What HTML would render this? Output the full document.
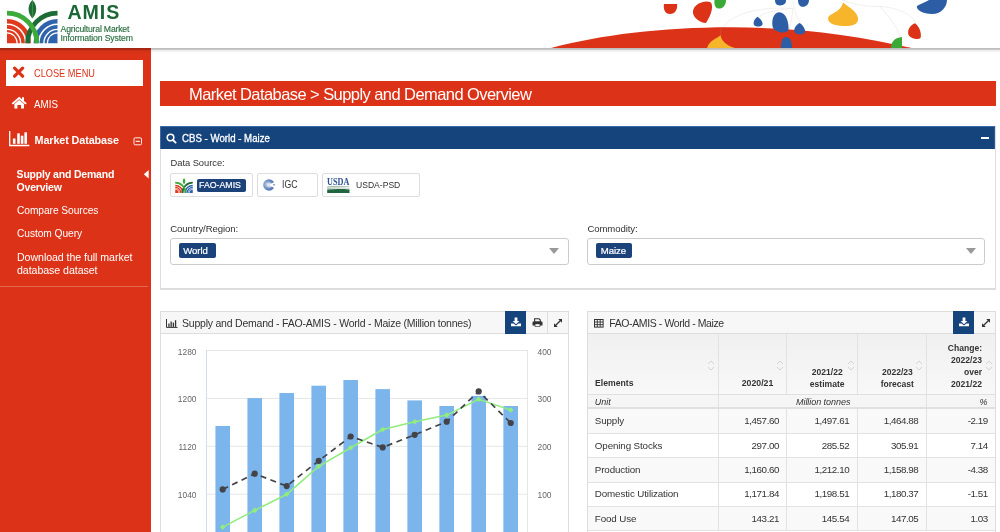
<!DOCTYPE html>
<html><head><meta charset="utf-8">
<style>
*{margin:0;padding:0;box-sizing:border-box}
html,body{width:1000px;height:532px;overflow:hidden;background:#fff;-webkit-font-smoothing:antialiased;font-family:"Liberation Sans",sans-serif;color:#333}
.a{position:absolute}
.t{white-space:nowrap;position:absolute;line-height:1}
#hdr{left:0;top:0;width:1000px;height:48px;background:#fff;z-index:5}
#shadow{left:0;top:48px;width:1000px;height:5px;z-index:6;background:linear-gradient(rgba(0,0,0,.27) 0,rgba(0,0,0,.22) 1.5px,rgba(0,0,0,.07) 2.5px,rgba(0,0,0,0) 5px)}
#side{left:0;top:48px;width:151px;height:484px;background:#dc3318;color:#fff}
.btn{position:absolute;border:1px solid #ddd;border-radius:2px;background:#fff}
.tag{position:absolute;background:#1b4279;color:#fff;border-radius:2px}
.sel{position:absolute;border:1px solid #ccc;border-radius:3px;background:#fff}
.arrow{position:absolute;width:0;height:0;border-left:5.5px solid transparent;border-right:5.5px solid transparent;border-top:6px solid #999}
</style></head><body><div id="root" style="position:absolute;left:0;top:0;width:1000px;height:532px;will-change:transform">
<div id="hdr" class="a">
<svg class="a" style="left:0;top:0" width="140" height="48" viewBox="0 0 140 48">
  <defs><clipPath id="lc"><rect x="7" y="0" width="50.5" height="43.2"/></clipPath></defs>
  <g clip-path="url(#lc)">
    <g fill="none" stroke="#e03a1e">
      <circle cx="7" cy="43" r="21.75" stroke-width="4.3"/>
      <circle cx="7" cy="43" r="16.1" stroke-width="3.6"/>
      <circle cx="7" cy="43" r="11.8" stroke-width="2.2"/>
    </g>
    <circle cx="7" cy="43" r="9.5" fill="#e03a1e"/>
    <g fill="none" stroke="#2f64ad">
      <circle cx="57.5" cy="43" r="21.75" stroke-width="4.3"/>
      <circle cx="57.5" cy="43" r="16.1" stroke-width="3.6"/>
      <circle cx="57.5" cy="43" r="11.8" stroke-width="2.2"/>
    </g>
    <circle cx="57.5" cy="43" r="9.5" fill="#2f64ad"/>
    <circle cx="57.5" cy="43" r="29.9" fill="none" stroke="#1d6b35" stroke-width="4.8"/>
    <circle cx="7" cy="43" r="29.9" fill="none" stroke="#3daa3c" stroke-width="4.8"/>
  </g>
  <path d="M32.4,0 C37.5,5 37.5,13 32.4,18.5 C27.3,13 27.3,5 32.4,0 Z" fill="#1d6b35"/>
  <path d="M32.4,1 L32.4,18" stroke="#4aa04a" stroke-width="0.8"/>
  <text x="67.5" y="18.8" font-family="Liberation Sans" font-weight="bold" font-size="19.6" fill="#1a6634" letter-spacing="0.95">AMIS</text>
  <text x="60.6" y="32.4" font-family="Liberation Sans" font-size="8.7" fill="#2a6e40" stroke="#2a6e40" stroke-width="0.15" letter-spacing="-0.2">Agricultural Market</text>
  <text x="60.6" y="41.4" font-family="Liberation Sans" font-size="8.7" fill="#2a6e40" stroke="#2a6e40" stroke-width="0.15" letter-spacing="-0.15">Information System</text>
</svg>
<svg class="a" style="left:540px;top:0" width="460" height="48" viewBox="540 0 460 48">
  <g fill="none" stroke="#e4e4e4" stroke-width="0.6">
    <path d="M793,8.5 C760,6 724,14 720,35"/>
    <path d="M793,8.5 C780,9 766,12 758,17"/>
    <path d="M793,0 C793,8 797,16 800,23"/>
    <path d="M793,8.5 C792,18 790,28 787,37"/>
    <path d="M842,0 C852,4 866,7 880,6.5 C895,7 912,14 916,23"/>
    <path d="M880,6.5 C888,15 898,28 900,37"/>
  </g>
  <path d="M549,48.5 C600,35 660,27.5 730,27.3 C800,27.2 860,36 914,48.5 Z" fill="#dc3318"/>
  <path d="M707,48 C708.5,43.5 711,41 715.5,38.5 C718.5,37 720,36 720.5,35 C721.5,41 726,45.5 735,48 Z" fill="#f7b52c"/><path d="M720.5,35 C720.5,31 721,29 722,27.5" stroke="#c9584a" stroke-width="0.5" fill="none"/>
  <path d="M664,4 L677,4 C678,9 675,14 670,14 C665,14 663,9 664,4 Z" fill="#dc3318"/>
  <path d="M710,2 C714,4 712,14 706,23 C700,23 692,17 693,11 C694,4 704,0 710,2 Z" fill="#dc3318"/>
  <path d="M714.5,0 L726,0 C726,5 723,8.8 718.5,8.6 C715,8.4 714,4 714.5,0 Z" fill="#3aa935"/>
  <path d="M757.5,16.8 C760,18.5 762.8,21 762.5,24.5 C762,27 755,27.5 753.8,24.5 C753,21.5 755,18.5 757.5,16.8 Z" fill="#2c5da5"/>
  <path d="M779,12.2 C786,12 789,22 788.5,30 C787,34 776,33 773,28 C771,21 773,13 779,12.2 Z" fill="#2c5da5"/>
  <path d="M775,0 L786,0 C786.5,3 784,5.4 780,5.4 C776,5.4 775,3 775,0 Z" fill="#2c5da5"/>
  <path d="M798,0 L809,0 C809,4 806,6.8 803,6.8 C799,6.8 798,3 798,0 Z" fill="#2c5da5"/>
  <path d="M799.5,23 C803,25 805.5,29 805,32.5 C803,35.5 795.5,35 794.3,31.5 C793.8,28 796,25 799.5,23 Z" fill="#2c5da5"/>
  <path d="M786,37 C790,37 792,41 792,48 L781,48 C781,42 782,37 786,37 Z" fill="#2c5da5"/>
  <path d="M843,2.5 C850,8 858,12 858,19 C858.5,25.5 850,26.5 840,25.8 C830,25 826,20 829,16 C832,13 841,11.5 843,2.5 Z" fill="#f7b52c"/>
  <path d="M902,37 L902,48 L891,48 C891,42 894,38 902,37 Z" fill="#3aa935"/>
  <path d="M915,23.2 C919,26 922,33 920.5,38 C918,40 911,39 908.5,35 C907,30 910,25 915,23.2 Z" fill="#dc3318"/>
  <path d="M947,0 C947,6 942,14 932,14 C923,14 916,10 917,6 C920,4 926,2 929,0 Z" fill="#2c5da5"/>
</svg>
</div>
<div id="shadow" class="a"></div>

<div id="side" class="a">
  <div class="a" style="left:6px;top:12px;width:137px;height:26px;background:#fff"></div>
  <svg class="a" style="left:12px;top:18px" width="14" height="13" viewBox="0 0 14 13"><path d="M2.6,2.2 L10.6,10.2 M10.6,2.2 L2.6,10.2" stroke="#dc3318" stroke-width="3.2" stroke-linecap="round"/></svg>
  <div class="t" style="left:34px;top:21px;font-size:10.4px;color:#dc3318;transform:scaleX(0.887);transform-origin:0 0">CLOSE MENU</div>
  <svg class="a" style="left:11px;top:48px" width="17" height="13" viewBox="0 0 17 13"><path d="M8.2,0.8 L0.6,7.3 L2,8.6 L8.2,3.3 L14.4,8.6 L15.8,7.3 L13,4.9 L13,1.2 L11,1.2 L11,3.2 Z M3.4,8 L8.2,4.1 L13,8 L13,12.6 L10,12.6 L10,9 L6.4,9 L6.4,12.6 L3.4,12.6 Z" fill="#fff"/></svg>
  <div class="t" style="left:34px;top:52px;font-size:10.3px;transform:scaleX(0.95);transform-origin:0 0">AMIS</div>
  <svg class="a" style="left:9px;top:83px" width="22" height="16" viewBox="0 0 22 16"><path d="M0.7,0 V14.5 H20.3" stroke="#fff" stroke-width="1.3" fill="none"/><rect x="3.9" y="7.5" width="2.6" height="5.3" fill="#fff"/><rect x="8.2" y="2.4" width="2.6" height="10.4" fill="#fff"/><rect x="11.8" y="4.7" width="2.6" height="8.1" fill="#fff"/><rect x="15.4" y="1.3" width="2.6" height="11.5" fill="#fff"/></svg>
  <div class="t" style="left:34.5px;top:87px;font-size:10.8px;font-weight:bold;letter-spacing:-0.1px">Market Database</div>
  <svg class="a" style="left:132.5px;top:89px" width="10" height="9" viewBox="0 0 10 9"><rect x="1" y="0.8" width="7.5" height="7" rx="1.2" fill="none" stroke="#fff" stroke-width="0.9"/><rect x="2.7" y="3.8" width="4.1" height="1.1" fill="#fff"/></svg>
  <div class="t" style="left:16.6px;top:120px;font-size:10.5px;font-weight:bold;line-height:12.5px;letter-spacing:-0.2px">Supply and Demand<br>Overview</div>
  <svg class="a" style="left:143px;top:122px" width="6" height="9" viewBox="0 0 6 9"><path d="M5.7,0 L5.7,8.5 L0.8,4.25 Z" fill="#fff"/></svg>
  <div class="t" style="left:17px;top:158px;font-size:10.2px;letter-spacing:-0.05px">Compare Sources</div>
  <div class="t" style="left:17px;top:181px;font-size:10.2px;letter-spacing:-0.05px">Custom Query</div>
  <div class="t" style="left:17px;top:202.8px;font-size:10.6px;line-height:13px;letter-spacing:-0.05px">Download the full market<br>database dataset</div>
  <div class="a" style="left:0;top:238px;width:148px;height:1px;background:#e46a52"></div>
</div>

<!-- title -->
<div class="a" style="left:160px;top:81px;width:836px;height:25.4px;background:#dc3318"></div>
<div class="t" style="left:189px;top:86px;font-size:16.5px;color:#fff;letter-spacing:-0.57px">Market Database &gt; Supply and Demand Overview</div>

<!-- CBS panel -->
<div class="a" style="left:160px;top:126px;width:836px;height:163.5px;border:1px solid #ddd;border-top:none;border-bottom:2px solid #ddd"></div>
<div class="a" style="left:160.3px;top:126px;width:835.2px;height:23px;background:#15437b;border:1px solid #3b6aa8;border-bottom:none;border-right-color:#2b5a96"></div>
<svg class="a" style="left:166px;top:133px" width="11" height="11" viewBox="0 0 11 11"><circle cx="4.5" cy="4.5" r="3.3" fill="none" stroke="#fff" stroke-width="1.6"/><path d="M6.8,6.8 L9.6,9.6" stroke="#fff" stroke-width="1.9" stroke-linecap="round"/></svg>
<div class="t" style="left:182px;top:134px;font-size:10.4px;color:#fff;letter-spacing:0px;-webkit-text-stroke:0.3px #fff;transform:scaleX(0.93);transform-origin:0 0">CBS - World - Maize</div>
<div class="a" style="left:981px;top:136.8px;width:8px;height:2.4px;background:#fff"></div>

<div class="t" style="left:170.5px;top:157.8px;font-size:9.4px;color:#333;letter-spacing:-0.05px">Data Source:</div>
<div class="btn" style="left:170.3px;top:173.2px;width:82.5px;height:24px"></div>
<div class="btn" style="left:257.2px;top:173.2px;width:61px;height:24px"></div>
<div class="btn" style="left:322.4px;top:173.2px;width:98px;height:24px"></div>
<!-- mini AMIS logo -->
<svg class="a" style="left:175px;top:178px" width="18" height="15" viewBox="7 0 50.5 43.2">
  <g clip-path="url(#lc)">
    <g fill="none" stroke="#e03a1e"><circle cx="7" cy="43" r="21.75" stroke-width="4.3"/><circle cx="7" cy="43" r="16.1" stroke-width="3.6"/><circle cx="7" cy="43" r="11.8" stroke-width="2.2"/></g>
    <circle cx="7" cy="43" r="9.5" fill="#e03a1e"/>
    <g fill="none" stroke="#2f64ad"><circle cx="57.5" cy="43" r="21.75" stroke-width="4.3"/><circle cx="57.5" cy="43" r="16.1" stroke-width="3.6"/><circle cx="57.5" cy="43" r="11.8" stroke-width="2.2"/></g>
    <circle cx="57.5" cy="43" r="9.5" fill="#2f64ad"/>
    <circle cx="57.5" cy="43" r="29.9" fill="none" stroke="#1d6b35" stroke-width="4.8"/>
    <circle cx="7" cy="43" r="29.9" fill="none" stroke="#3daa3c" stroke-width="4.8"/>
  </g>
  <path d="M32.4,0 C37.5,5 37.5,13 32.4,18.5 C27.3,13 27.3,5 32.4,0 Z" fill="#3daa3c"/>
</svg>
<div class="tag" style="left:196.8px;top:178.5px;width:49px;height:13.3px"></div>
<div class="t" style="left:199px;top:179.8px;font-size:9.6px;color:#fff;-webkit-text-stroke:0.2px #fff;transform:scaleX(0.915);transform-origin:0 0">FAO-AMIS</div>
<!-- IGC logo -->
<svg class="a" style="left:261.5px;top:177.5px" width="14" height="14" viewBox="0 0 14 14">
  <defs><radialGradient id="gg" cx="0.35" cy="0.45" r="0.7"><stop offset="0" stop-color="#c9d6ea"/><stop offset="0.5" stop-color="#6f90c4"/><stop offset="1" stop-color="#3e64a6"/></radialGradient></defs>
  <circle cx="7" cy="7" r="5.8" fill="url(#gg)"/>
  <path d="M7,7 L13.5,3.2 L13.5,10.8 Z" fill="#fff"/>
  <circle cx="7.6" cy="7" r="2.6" fill="#fff" opacity="0.55"/>
  <circle cx="12" cy="6.8" r="0.8" fill="#4a70b0"/>
</svg>
<div class="t" style="left:282px;top:179.5px;font-size:10.4px;color:#333;transform:scaleX(0.84);transform-origin:0 0">IGC</div>
<!-- USDA logo -->
<svg class="a" style="left:326.5px;top:177px" width="23" height="17" viewBox="0 0 23 17">
  <text x="0" y="8.2" font-family="Liberation Serif" font-weight="bold" font-size="9.6" fill="#2a4f94" textLength="22.3" lengthAdjust="spacingAndGlyphs">USDA</text>
  <path d="M0.2,9.6 C7,8.4 15,8.6 22.5,9.4 L22.5,10.2 C15,9.6 7,9.6 0.2,10.8 Z" fill="#9db5a5"/>
  <path d="M0.2,11 C7,10 15,10.2 22.5,11 L22.5,11.8 C15,11.2 7,11.2 0.2,12.2 Z" fill="#b8c9bd"/>
  <path d="M0.2,12.6 C7,11.8 15,11.9 22.5,12.4 L22.5,16 L0.2,16 Z" fill="#1f6640"/>
</svg>
<div class="t" style="left:355.7px;top:180px;font-size:9.8px;color:#333;transform:scaleX(0.875);transform-origin:0 0">USDA-PSD</div>

<div class="t" style="left:170.2px;top:223.6px;font-size:9.6px;color:#333;letter-spacing:-0.1px">Country/Region:</div>
<div class="sel" style="left:170.2px;top:238.3px;width:398.5px;height:26.5px"></div>
<div class="tag" style="left:179.1px;top:242.8px;width:36.5px;height:14.8px"></div>
<div class="t" style="left:183.3px;top:245.8px;font-size:9.6px;color:#fff;letter-spacing:-0.1px;-webkit-text-stroke:0.2px #fff">World</div>
<div class="arrow" style="left:548.9px;top:248px"></div>

<div class="t" style="left:587.4px;top:223.6px;font-size:9.6px;color:#333;letter-spacing:-0.1px">Commodity:</div>
<div class="sel" style="left:587.4px;top:238.3px;width:398px;height:26.5px"></div>
<div class="tag" style="left:596px;top:242.8px;width:36px;height:14.8px"></div>
<div class="t" style="left:600.8px;top:245.8px;font-size:9.6px;color:#fff;letter-spacing:-0.1px;-webkit-text-stroke:0.2px #fff">Maize</div>
<div class="arrow" style="left:966px;top:248px"></div>

<!-- CHART -->
<div class="a" style="left:160px;top:310.8px;width:409px;height:240px;border:1px solid #ddd;background:#fff"></div>
<div class="a" style="left:161px;top:311.8px;width:407px;height:22.5px;background:#f7f7f7;border-bottom:1px solid #ddd"></div>
<svg class="a" style="left:165.5px;top:319px" width="12" height="9" viewBox="0 0 12 9"><path d="M0.5,0 V8.4 H11.5" stroke="#333" stroke-width="1" fill="none"/><rect x="2.3" y="4.5" width="1.3" height="3.4" fill="#333"/><rect x="4.5" y="2.5" width="1.3" height="5.4" fill="#333"/><rect x="6.7" y="3.6" width="1.3" height="4.3" fill="#333"/><rect x="8.9" y="1.2" width="1.3" height="6.7" fill="#333"/></svg>
<div class="t" style="left:182px;top:317.6px;font-size:10.5px;color:#333;letter-spacing:-0.22px">Supply and Demand - FAO-AMIS - World - Maize (Million tonnes)</div>
<div class="a" style="left:505.2px;top:311px;width:21px;height:23.3px;background:#15437b"></div>
<div class="a" style="left:547px;top:311.8px;width:1px;height:22.5px;background:#ddd"></div>
<svg class="a" style="left:510px;top:317px" width="12" height="10" viewBox="0 0 12 10"><path d="M4.6,0.6 H7.4 V4 H9.4 L6,7.2 L2.6,4 H4.6 Z" fill="#fff"/><path d="M1,6.4 H3.6 L6,8.4 L8.4,6.4 H11 V9.3 H1 Z" fill="#fff"/></svg>
<svg class="a" style="left:532px;top:318px" width="11" height="10" viewBox="0 0 11 10"><path d="M2.6,0.8 H7 L8.3,2 V4 H2.6 Z" fill="none" stroke="#333" stroke-width="1.1"/><path d="M1.2,3.6 H9.8 Q10.5,3.6 10.5,4.4 V7.4 H8.3 V8.8 H2.7 V7.4 H0.5 V4.4 Q0.5,3.6 1.2,3.6 Z" fill="#333"/><rect x="3.4" y="6.2" width="4.2" height="1.9" fill="#f7f7f7"/></svg>
<svg class="a" style="left:553px;top:318px" width="10" height="10" viewBox="0 0 10 10"><path d="M1.5,8.5 L8.5,1.5" stroke="#333" stroke-width="1.2"/><path d="M5.2,1 H9 V4.8 Z M1,5.2 V9 H4.8 Z" fill="#333"/></svg>
<svg class="a" style="left:160px;top:335px" width="409" height="197" viewBox="160 335 409 197">
<rect x="206.5" y="350.0" width="321" height="1" fill="#e6e6e6"/>
<rect x="206.5" y="397.9" width="321" height="1" fill="#e6e6e6"/>
<rect x="206.5" y="445.8" width="321" height="1" fill="#e6e6e6"/>
<rect x="206.5" y="493.7" width="321" height="1" fill="#e6e6e6"/>
<rect x="206" y="350" width="1" height="190" fill="#d5ddec"/>
<rect x="527" y="350" width="1" height="190" fill="#e6e6e6"/>
<rect x="215.42" y="426.0" width="14.6" height="114.0" fill="#7cb5ec"/>
<rect x="247.42" y="398.1" width="14.6" height="141.9" fill="#7cb5ec"/>
<rect x="279.41" y="393.0" width="14.6" height="147.0" fill="#7cb5ec"/>
<rect x="311.41" y="385.7" width="14.6" height="154.3" fill="#7cb5ec"/>
<rect x="343.40" y="380.0" width="14.6" height="160.0" fill="#7cb5ec"/>
<rect x="375.40" y="389.1" width="14.6" height="150.9" fill="#7cb5ec"/>
<rect x="407.39" y="400.4" width="14.6" height="139.6" fill="#7cb5ec"/>
<rect x="439.39" y="406.0" width="14.6" height="134.0" fill="#7cb5ec"/>
<rect x="471.38" y="395.9" width="14.6" height="144.1" fill="#7cb5ec"/>
<rect x="503.38" y="406.0" width="14.6" height="134.0" fill="#7cb5ec"/>
<polyline points="222.7,527.1 254.7,510.4 286.7,494.3 318.7,466.3 350.7,447.7 382.7,429.5 414.7,421.7 446.7,415.1 478.7,399.3 510.7,410.0" fill="none" stroke="#90ed7d" stroke-width="1.6"/>
<path d="M222.7,524.3 L225.5,527.1 L222.7,529.9 L219.9,527.1 Z" fill="#90ed7d"/>
<path d="M254.7,507.6 L257.5,510.4 L254.7,513.2 L251.9,510.4 Z" fill="#90ed7d"/>
<path d="M286.7,491.5 L289.5,494.3 L286.7,497.1 L283.9,494.3 Z" fill="#90ed7d"/>
<path d="M318.7,463.5 L321.5,466.3 L318.7,469.1 L315.9,466.3 Z" fill="#90ed7d"/>
<path d="M350.7,444.9 L353.5,447.7 L350.7,450.5 L347.9,447.7 Z" fill="#90ed7d"/>
<path d="M382.7,426.7 L385.5,429.5 L382.7,432.3 L379.9,429.5 Z" fill="#90ed7d"/>
<path d="M414.7,418.9 L417.5,421.7 L414.7,424.5 L411.9,421.7 Z" fill="#90ed7d"/>
<path d="M446.7,412.3 L449.5,415.1 L446.7,417.9 L443.9,415.1 Z" fill="#90ed7d"/>
<path d="M478.7,396.5 L481.5,399.3 L478.7,402.1 L475.9,399.3 Z" fill="#90ed7d"/>
<path d="M510.7,407.2 L513.5,410.0 L510.7,412.8 L507.9,410.0 Z" fill="#90ed7d"/>
<polyline points="222.7,489.4 254.7,473.7 286.7,486.1 318.7,460.8 350.7,436.5 382.7,447.4 414.7,434.8 446.7,421.7 478.7,391.4 510.7,423.0" fill="none" stroke="#434348" stroke-width="1.7" stroke-dasharray="6 4.5"/>
<circle cx="222.7" cy="489.4" r="3.1" fill="#434348"/>
<circle cx="254.7" cy="473.7" r="3.1" fill="#434348"/>
<circle cx="286.7" cy="486.1" r="3.1" fill="#434348"/>
<circle cx="318.7" cy="460.8" r="3.1" fill="#434348"/>
<circle cx="350.7" cy="436.5" r="3.1" fill="#434348"/>
<circle cx="382.7" cy="447.4" r="3.1" fill="#434348"/>
<circle cx="414.7" cy="434.8" r="3.1" fill="#434348"/>
<circle cx="446.7" cy="421.7" r="3.1" fill="#434348"/>
<circle cx="478.7" cy="391.4" r="3.1" fill="#434348"/>
<circle cx="510.7" cy="423.0" r="3.1" fill="#434348"/>
<text x="196.5" y="354.5" text-anchor="end" font-family="Liberation Sans" font-size="8.4" fill="#666">1280</text>
<text x="196.5" y="402.4" text-anchor="end" font-family="Liberation Sans" font-size="8.4" fill="#666">1200</text>
<text x="196.5" y="450.3" text-anchor="end" font-family="Liberation Sans" font-size="8.4" fill="#666">1120</text>
<text x="196.5" y="498.2" text-anchor="end" font-family="Liberation Sans" font-size="8.4" fill="#666">1040</text>
<text x="537.5" y="354.5" font-family="Liberation Sans" font-size="8.4" fill="#666">400</text>
<text x="537.5" y="402.4" font-family="Liberation Sans" font-size="8.4" fill="#666">300</text>
<text x="537.5" y="450.3" font-family="Liberation Sans" font-size="8.4" fill="#666">200</text>
<text x="537.5" y="498.2" font-family="Liberation Sans" font-size="8.4" fill="#666">100</text>
</svg>
<div class="a" style="left:587px;top:310.8px;width:409px;height:240px;border:1px solid #ddd;background:#fff"></div>
<div class="a" style="left:588px;top:311.8px;width:407px;height:22.5px;background:#f7f7f7;border-bottom:1px solid #ddd"></div>
<svg class="a" style="left:593.5px;top:318.5px" width="10" height="9" viewBox="0 0 10 9"><rect x="0.5" y="0.5" width="8.6" height="7.6" fill="none" stroke="#333" stroke-width="1"/><path d="M0.5,3 H9 M0.5,5.6 H9 M3.3,0.5 V8 M6.2,0.5 V8" stroke="#333" stroke-width="0.9"/></svg>
<div class="t" style="left:609.3px;top:317.6px;font-size:10.5px;color:#333;letter-spacing:-0.4px">FAO-AMIS - World - Maize</div>
<div class="a" style="left:953px;top:311px;width:21px;height:23.3px;background:#15437b"></div>
<svg class="a" style="left:957.8px;top:317px" width="12" height="10" viewBox="0 0 12 10"><path d="M4.6,0.6 H7.4 V4 H9.4 L6,7.2 L2.6,4 H4.6 Z" fill="#fff"/><path d="M1,6.4 H3.6 L6,8.4 L8.4,6.4 H11 V9.3 H1 Z" fill="#fff"/></svg>
<svg class="a" style="left:980.5px;top:318px" width="10" height="10" viewBox="0 0 10 10"><path d="M1.5,8.5 L8.5,1.5" stroke="#333" stroke-width="1.2"/><path d="M5.2,1 H9 V4.8 Z M1,5.2 V9 H4.8 Z" fill="#333"/></svg>
<div class="a" style="left:588px;top:334.3px;width:407px;height:60px;background:linear-gradient(#f0f0f0,#f8f8f8)"></div>
<div class="a" style="left:588px;top:394.3px;width:407px;height:14px;background:#f5f5f5"></div>
<div class="a" style="left:588px;top:394px;width:407px;height:1.4px;background:#e0e0e0"></div>
<div class="a" style="left:588px;top:407.2px;width:407px;height:1.5px;background:#e0e0e0"></div>
<div class="a" style="left:717.8px;top:334.3px;width:1px;height:60px;background:#e2e2e2"></div>
<div class="a" style="left:786.1px;top:334.3px;width:1px;height:60px;background:#e2e2e2"></div>
<div class="a" style="left:857.3px;top:334.3px;width:1px;height:60px;background:#e2e2e2"></div>
<div class="a" style="left:925.5px;top:334.3px;width:1px;height:60px;background:#e2e2e2"></div>
<div class="a" style="left:717.8px;top:394.3px;width:1px;height:14px;background:#e2e2e2"></div>
<div class="a" style="left:925.5px;top:394.3px;width:1px;height:14px;background:#e2e2e2"></div>
<svg class="a" style="left:707.3px;top:359.5px" width="8" height="11" viewBox="0 0 8 11"><path d="M1,4 L4,1 L7,4 M1,7 L4,10 L7,7" fill="none" stroke="#d0d0d0" stroke-width="0.9"/></svg>
<svg class="a" style="left:775.5px;top:359.5px" width="8" height="11" viewBox="0 0 8 11"><path d="M1,4 L4,1 L7,4 M1,7 L4,10 L7,7" fill="none" stroke="#d0d0d0" stroke-width="0.9"/></svg>
<svg class="a" style="left:846.8px;top:359.5px" width="8" height="11" viewBox="0 0 8 11"><path d="M1,4 L4,1 L7,4 M1,7 L4,10 L7,7" fill="none" stroke="#d0d0d0" stroke-width="0.9"/></svg>
<svg class="a" style="left:914.9px;top:359.5px" width="8" height="11" viewBox="0 0 8 11"><path d="M1,4 L4,1 L7,4 M1,7 L4,10 L7,7" fill="none" stroke="#d0d0d0" stroke-width="0.9"/></svg>
<svg class="a" style="left:984.5px;top:359.5px" width="8" height="11" viewBox="0 0 8 11"><path d="M1,4 L4,1 L7,4 M1,7 L4,10 L7,7" fill="none" stroke="#d0d0d0" stroke-width="0.9"/></svg>
<div class="t" style="left:594.7px;top:377.7px;font-size:9.5px;font-weight:bold;color:#333;transform:scaleX(0.91);transform-origin:0 0">Elements</div>
<div class="t" style="right:227.1px;top:377.7px;font-size:9.5px;font-weight:bold;color:#333;transform:scaleX(0.92);transform-origin:100% 0">2020/21</div>
<div class="t" style="right:155.7px;top:366.2px;font-size:9.5px;font-weight:bold;color:#333;line-height:11.5px;text-align:center;transform:scaleX(0.9);transform-origin:100% 0">2021/22<br>estimate</div>
<div class="t" style="right:86px;top:366.2px;font-size:9.5px;font-weight:bold;color:#333;line-height:11.5px;text-align:center;transform:scaleX(0.9);transform-origin:100% 0">2022/23<br>forecast</div>
<div class="t" style="right:17.6px;top:342.2px;font-size:9.5px;font-weight:bold;color:#333;line-height:11.9px;text-align:right;transform:scaleX(0.9);transform-origin:100% 0">Change:<br>2022/23<br>over<br>2021/22</div>
<div class="t" style="left:594.7px;top:397.5px;font-size:9px;font-style:italic;color:#333">Unit</div>
<div class="t" style="left:796px;top:397.5px;font-size:9px;font-style:italic;color:#333;letter-spacing:-0.05px">Million tonnes</div>
<div class="t" style="right:12.4px;top:397.5px;font-size:9px;font-style:italic;color:#333">%</div>
<div class="a" style="left:588px;top:409.4px;width:407px;height:23.4px;background:#f9f9f9"></div>
<div class="a" style="left:588px;top:432.8px;width:407px;height:1px;background:#e2e2e2"></div>
<div class="a" style="left:717.8px;top:409.4px;width:1px;height:24.4px;background:#e2e2e2"></div>
<div class="a" style="left:786.1px;top:409.4px;width:1px;height:24.4px;background:#e2e2e2"></div>
<div class="a" style="left:857.3px;top:409.4px;width:1px;height:24.4px;background:#e2e2e2"></div>
<div class="a" style="left:925.5px;top:409.4px;width:1px;height:24.4px;background:#e2e2e2"></div>
<div class="t" style="left:594.8px;top:416.1px;font-size:9.8px;color:#333;letter-spacing:-0.12px">Supply</div>
<div class="t" style="right:221.0px;top:416.1px;font-size:9.8px;color:#333;letter-spacing:-0.42px">1,457.60</div>
<div class="t" style="right:150.8px;top:416.1px;font-size:9.8px;color:#333;letter-spacing:-0.42px">1,497.61</div>
<div class="t" style="right:81.6px;top:416.1px;font-size:9.8px;color:#333;letter-spacing:-0.42px">1,464.88</div>
<div class="t" style="right:12.1px;top:416.1px;font-size:9.8px;color:#333;letter-spacing:-0.42px">-2.19</div>
<div class="a" style="left:588px;top:433.8px;width:407px;height:23.4px;background:#fff"></div>
<div class="a" style="left:588px;top:457.2px;width:407px;height:1px;background:#e2e2e2"></div>
<div class="a" style="left:717.8px;top:433.8px;width:1px;height:24.4px;background:#e2e2e2"></div>
<div class="a" style="left:786.1px;top:433.8px;width:1px;height:24.4px;background:#e2e2e2"></div>
<div class="a" style="left:857.3px;top:433.8px;width:1px;height:24.4px;background:#e2e2e2"></div>
<div class="a" style="left:925.5px;top:433.8px;width:1px;height:24.4px;background:#e2e2e2"></div>
<div class="t" style="left:594.8px;top:440.5px;font-size:9.8px;color:#333;letter-spacing:-0.12px">Opening Stocks</div>
<div class="t" style="right:221.0px;top:440.5px;font-size:9.8px;color:#333;letter-spacing:-0.42px">297.00</div>
<div class="t" style="right:150.8px;top:440.5px;font-size:9.8px;color:#333;letter-spacing:-0.42px">285.52</div>
<div class="t" style="right:81.6px;top:440.5px;font-size:9.8px;color:#333;letter-spacing:-0.42px">305.91</div>
<div class="t" style="right:12.1px;top:440.5px;font-size:9.8px;color:#333;letter-spacing:-0.42px">7.14</div>
<div class="a" style="left:588px;top:458.2px;width:407px;height:23.4px;background:#f9f9f9"></div>
<div class="a" style="left:588px;top:481.6px;width:407px;height:1px;background:#e2e2e2"></div>
<div class="a" style="left:717.8px;top:458.2px;width:1px;height:24.4px;background:#e2e2e2"></div>
<div class="a" style="left:786.1px;top:458.2px;width:1px;height:24.4px;background:#e2e2e2"></div>
<div class="a" style="left:857.3px;top:458.2px;width:1px;height:24.4px;background:#e2e2e2"></div>
<div class="a" style="left:925.5px;top:458.2px;width:1px;height:24.4px;background:#e2e2e2"></div>
<div class="t" style="left:594.8px;top:464.9px;font-size:9.8px;color:#333;letter-spacing:-0.12px">Production</div>
<div class="t" style="right:221.0px;top:464.9px;font-size:9.8px;color:#333;letter-spacing:-0.42px">1,160.60</div>
<div class="t" style="right:150.8px;top:464.9px;font-size:9.8px;color:#333;letter-spacing:-0.42px">1,212.10</div>
<div class="t" style="right:81.6px;top:464.9px;font-size:9.8px;color:#333;letter-spacing:-0.42px">1,158.98</div>
<div class="t" style="right:12.1px;top:464.9px;font-size:9.8px;color:#333;letter-spacing:-0.42px">-4.38</div>
<div class="a" style="left:588px;top:482.6px;width:407px;height:23.4px;background:#fff"></div>
<div class="a" style="left:588px;top:506.0px;width:407px;height:1px;background:#e2e2e2"></div>
<div class="a" style="left:717.8px;top:482.6px;width:1px;height:24.4px;background:#e2e2e2"></div>
<div class="a" style="left:786.1px;top:482.6px;width:1px;height:24.4px;background:#e2e2e2"></div>
<div class="a" style="left:857.3px;top:482.6px;width:1px;height:24.4px;background:#e2e2e2"></div>
<div class="a" style="left:925.5px;top:482.6px;width:1px;height:24.4px;background:#e2e2e2"></div>
<div class="t" style="left:594.8px;top:489.3px;font-size:9.8px;color:#333;letter-spacing:-0.12px">Domestic Utilization</div>
<div class="t" style="right:221.0px;top:489.3px;font-size:9.8px;color:#333;letter-spacing:-0.42px">1,171.84</div>
<div class="t" style="right:150.8px;top:489.3px;font-size:9.8px;color:#333;letter-spacing:-0.42px">1,198.51</div>
<div class="t" style="right:81.6px;top:489.3px;font-size:9.8px;color:#333;letter-spacing:-0.42px">1,180.37</div>
<div class="t" style="right:12.1px;top:489.3px;font-size:9.8px;color:#333;letter-spacing:-0.42px">-1.51</div>
<div class="a" style="left:588px;top:507.0px;width:407px;height:23.4px;background:#f9f9f9"></div>
<div class="a" style="left:588px;top:530.4px;width:407px;height:1px;background:#e2e2e2"></div>
<div class="a" style="left:717.8px;top:507.0px;width:1px;height:24.4px;background:#e2e2e2"></div>
<div class="a" style="left:786.1px;top:507.0px;width:1px;height:24.4px;background:#e2e2e2"></div>
<div class="a" style="left:857.3px;top:507.0px;width:1px;height:24.4px;background:#e2e2e2"></div>
<div class="a" style="left:925.5px;top:507.0px;width:1px;height:24.4px;background:#e2e2e2"></div>
<div class="t" style="left:594.8px;top:513.7px;font-size:9.8px;color:#333;letter-spacing:-0.12px">Food Use</div>
<div class="t" style="right:221.0px;top:513.7px;font-size:9.8px;color:#333;letter-spacing:-0.42px">143.21</div>
<div class="t" style="right:150.8px;top:513.7px;font-size:9.8px;color:#333;letter-spacing:-0.42px">145.54</div>
<div class="t" style="right:81.6px;top:513.7px;font-size:9.8px;color:#333;letter-spacing:-0.42px">147.05</div>
<div class="t" style="right:12.1px;top:513.7px;font-size:9.8px;color:#333;letter-spacing:-0.42px">1.03</div>
<!-- /CT -->
</div></body></html>
